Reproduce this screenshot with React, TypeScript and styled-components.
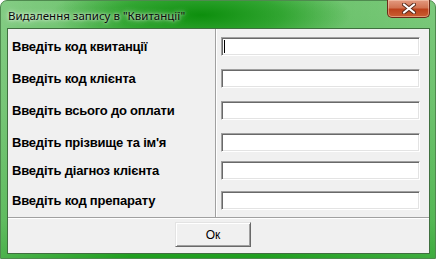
import React from "react";
import styled, { createGlobalStyle } from "styled-components";

const Global = createGlobalStyle`
  html, body { margin: 0; padding: 0; background: #ffffff; }
  body { width: 436px; height: 266px; overflow: hidden; }
`;

const Window = styled.div`
  width: 436px;
  height: 259px;
  box-sizing: border-box;
  border-radius: 7px 7px 0 0;
  background:
    linear-gradient(90deg, rgba(255,255,255,0.2) 0%, rgba(255,255,255,0) 30%, rgba(0,0,0,0) 60%, rgba(255,255,255,0.14) 100%),
    linear-gradient(180deg, #66c066 0%, #56b856 40%, #3aac3a 85%, #1f9e1f 100%);
  border: 1px solid #4f8a4f;
  display: flex;
  flex-direction: column;
  padding: 0 5px 4px 6px;
  font-family: "Liberation Sans", Arial, sans-serif;
`;

const TitleBar = styled.div`
  height: 27px;
  display: flex;
  align-items: flex-start;
  justify-content: space-between;
  background: radial-gradient(ellipse 150px 36px at 200px 14px, rgba(8,140,8,0.95) 0%, rgba(16,148,16,0.6) 55%, rgba(0,0,0,0) 100%);
  margin: 0 -5px 0 -6px;
  padding: 0 5px 0 7px;
`;

const Title = styled.div`
  font-family: "Noto Sans", "Open Sans", sans-serif;
  font-size: 11.5px;
  color: #0a0a0a;
  margin-top: 7px;
  text-shadow: 0 0 6px rgba(255,255,255,0.85), 0 0 3px rgba(255,255,255,0.8);
`;

const CloseButton = styled.div`
  width: 43px;
  height: 18px;
  margin-top: -1px;
  box-sizing: border-box;
  border: 1px solid #6b2a18;
  border-top: none;
  border-radius: 0 0 5px 5px;
  background: linear-gradient(180deg, #e39a80 0%, #d27453 45%, #bd421c 55%, #c95f32 100%);
  box-shadow: inset 0 0 0 1px rgba(255,220,200,0.45);
  display: flex;
  align-items: center;
  justify-content: center;
`;

const Client = styled.div`
  flex: 1;
  border: 1px solid #3f6f3f;
  background: #f0f0f0;
  display: flex;
  flex-direction: column;
`;

const FormGrid = styled.div`
  display: grid;
  grid-template-columns: 208px 1fr;
  grid-template-rows: 34px 30px 34px 30px 26px 34px;
  border-bottom: 1px solid #a0a0a0;
  box-shadow: 0 1px 0 #ffffff;
`;

const LabelCell = styled.div`
  display: flex;
  align-items: center;
  padding-left: 4px;
  border-right: 1px solid #a0a0a0;
  font-family: "Liberation Sans", Arial, sans-serif;
  font-weight: bold;
  font-size: 13px;
  color: #000;
  letter-spacing: -0.2px;
`;

const InputCell = styled.div`
  display: flex;
  align-items: center;
  padding-left: 4px;
  border-left: 1px solid #ffffff;
`;

const FieldWrap = styled.div`
  position: relative;
  width: 199px;
  height: 19px;
`;

const Field = styled.input`
  width: 199px;
  height: 19px;
  box-sizing: border-box;
  margin: 0;
  padding: 0 3px;
  border: 1px solid;
  border-color: #a0a0a0 #ffffff #ffffff #a0a0a0;
  box-shadow: inset 1px 1px 0 #696969, inset -1px -1px 0 #e3e3e3;
  background: #ffffff;
  outline: none;
  font-family: "Liberation Sans", Arial, sans-serif;
  font-size: 12px;
`;

const Caret = styled.span`
  position: absolute;
  left: 3px;
  top: 3px;
  width: 1px;
  height: 13px;
  background: #000;
`;

const Footer = styled.div`
  flex: 1;
  display: flex;
  justify-content: flex-start;
  align-items: flex-start;
  padding: 4px 0 0 167px;
`;

const OkButton = styled.button`
  width: 76px;
  height: 25px;
  box-sizing: border-box;
  margin: 0;
  padding: 0;
  background: #f0f0f0;
  border: 1px solid;
  border-color: #e3e3e3 #696969 #696969 #e3e3e3;
  box-shadow: inset 1px 1px 0 #ffffff, inset -1px -1px 0 #a0a0a0;
  font-family: "Liberation Sans", Arial, sans-serif;
  font-size: 12px;
  color: #000;
  text-align: center;
`;

const rows = [
  "Введіть код квитанції",
  "Введіть код клієнта",
  "Введіть всього до оплати",
  "Введіть прізвище та ім'я",
  "Введіть діагноз клієнта",
  "Введіть код препарату",
];

export default function App() {
  return (
    <>
      <Global />
      <Window>
        <TitleBar>
          <Title>Видалення запису в "Квитанції"</Title>
          <CloseButton>
            <svg width="14" height="11" viewBox="0 0 14 11">
              <path d="M2 1.5 L12 9.5 M12 1.5 L2 9.5" stroke="#5a2a1a" strokeWidth="4" strokeLinecap="round" />
              <path d="M2 1.5 L12 9.5 M12 1.5 L2 9.5" stroke="#ffffff" strokeWidth="2.2" strokeLinecap="round" />
            </svg>
          </CloseButton>
        </TitleBar>
        <Client>
          <FormGrid>
            {rows.map((label, i) => (
              <React.Fragment key={label}>
                <LabelCell>{label}</LabelCell>
                <InputCell>
                  <FieldWrap>
                    <Field type="text" defaultValue="" />
                    {i === 0 && <Caret />}
                  </FieldWrap>
                </InputCell>
              </React.Fragment>
            ))}
          </FormGrid>
          <Footer>
            <OkButton>Ок</OkButton>
          </Footer>
        </Client>
      </Window>
    </>
  );
}
